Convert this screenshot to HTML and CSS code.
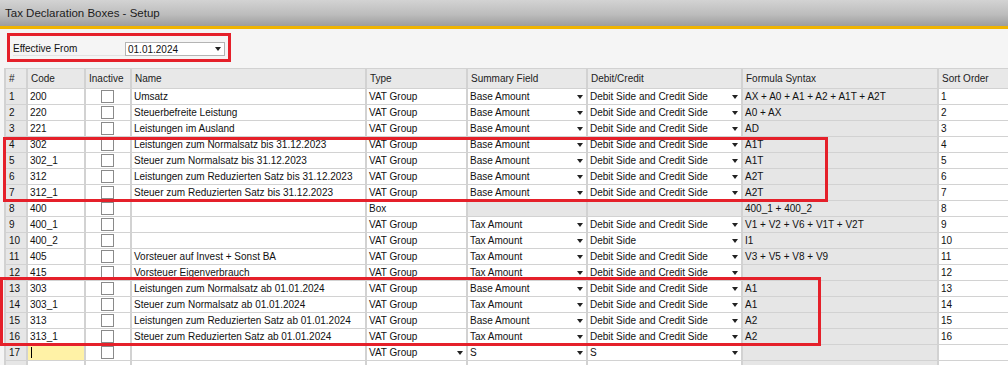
FILE: index.html
```html
<!DOCTYPE html>
<html lang="en">

<head>
  <meta charset="UTF-8">
  <meta name="viewport" content="width=device-width, initial-scale=1.0">
  <title>Tax Declaration Boxes - Setup</title>
  <link rel="stylesheet" href="styles.css">
</head>

<body>
  <div class="window">
    <div class="titleBar">Tax Declaration Boxes - Setup</div>

    <div class="filter">
      <span class="filterLabel">Effective From</span>
      <div class="combo">
        <span>01.01.2024</span>
        <i class="arrow"></i>
      </div>
    </div>

    <div class="grid">
      <div class="cell head">#</div>
      <div class="cell head">Code</div>
      <div class="cell head">Inactive</div>
      <div class="cell head">Name</div>
      <div class="cell head">Type</div>
      <div class="cell head">Summary Field</div>
      <div class="cell head">Debit/Credit</div>
      <div class="cell head">Formula Syntax</div>
      <div class="cell head">Sort Order</div>

      <div class="cell num">1</div>
      <div class="cell">200</div>
      <div class="cell chk"><span class="box"></span></div>
      <div class="cell">Umsatz</div>
      <div class="cell">VAT Group</div>
      <div class="cell dd">Base Amount<i class="arrow"></i></div>
      <div class="cell dd">Debit Side and Credit Side<i class="arrow"></i></div>
      <div class="cell ro">AX + A0 + A1 + A2 + A1T + A2T</div>
      <div class="cell">1</div>

      <div class="cell num">2</div>
      <div class="cell">220</div>
      <div class="cell chk"><span class="box"></span></div>
      <div class="cell">Steuerbefreite Leistung</div>
      <div class="cell">VAT Group</div>
      <div class="cell dd">Base Amount<i class="arrow"></i></div>
      <div class="cell dd">Debit Side and Credit Side<i class="arrow"></i></div>
      <div class="cell ro">A0 + AX</div>
      <div class="cell">2</div>

      <div class="cell num">3</div>
      <div class="cell">221</div>
      <div class="cell chk"><span class="box"></span></div>
      <div class="cell">Leistungen im Ausland</div>
      <div class="cell">VAT Group</div>
      <div class="cell dd">Base Amount<i class="arrow"></i></div>
      <div class="cell dd">Debit Side and Credit Side<i class="arrow"></i></div>
      <div class="cell ro">AD</div>
      <div class="cell">3</div>

      <div class="cell num">4</div>
      <div class="cell">302</div>
      <div class="cell chk"><span class="box"></span></div>
      <div class="cell">Leistungen zum Normalsatz bis 31.12.2023</div>
      <div class="cell">VAT Group</div>
      <div class="cell dd">Base Amount<i class="arrow"></i></div>
      <div class="cell dd">Debit Side and Credit Side<i class="arrow"></i></div>
      <div class="cell ro">A1T</div>
      <div class="cell">4</div>

      <div class="cell num">5</div>
      <div class="cell">302_1</div>
      <div class="cell chk"><span class="box"></span></div>
      <div class="cell">Steuer zum Normalsatz bis 31.12.2023</div>
      <div class="cell">VAT Group</div>
      <div class="cell dd">Base Amount<i class="arrow"></i></div>
      <div class="cell dd">Debit Side and Credit Side<i class="arrow"></i></div>
      <div class="cell ro">A1T</div>
      <div class="cell">5</div>

      <div class="cell num">6</div>
      <div class="cell">312</div>
      <div class="cell chk"><span class="box"></span></div>
      <div class="cell">Leistungen zum Reduzierten Satz bis 31.12.2023</div>
      <div class="cell">VAT Group</div>
      <div class="cell dd">Base Amount<i class="arrow"></i></div>
      <div class="cell dd">Debit Side and Credit Side<i class="arrow"></i></div>
      <div class="cell ro">A2T</div>
      <div class="cell">6</div>

      <div class="cell num">7</div>
      <div class="cell">312_1</div>
      <div class="cell chk"><span class="box"></span></div>
      <div class="cell">Steuer zum Reduzierten Satz bis 31.12.2023</div>
      <div class="cell">VAT Group</div>
      <div class="cell dd">Base Amount<i class="arrow"></i></div>
      <div class="cell dd">Debit Side and Credit Side<i class="arrow"></i></div>
      <div class="cell ro">A2T</div>
      <div class="cell">7</div>

      <div class="cell num">8</div>
      <div class="cell">400</div>
      <div class="cell chk"><span class="box"></span></div>
      <div class="cell"></div>
      <div class="cell">Box</div>
      <div class="cell ro"></div>
      <div class="cell ro"></div>
      <div class="cell ro">400_1 + 400_2</div>
      <div class="cell">8</div>

      <div class="cell num">9</div>
      <div class="cell">400_1</div>
      <div class="cell chk"><span class="box"></span></div>
      <div class="cell"></div>
      <div class="cell">VAT Group</div>
      <div class="cell dd">Tax Amount<i class="arrow"></i></div>
      <div class="cell dd">Debit Side and Credit Side<i class="arrow"></i></div>
      <div class="cell ro">V1 + V2 + V6 + V1T + V2T</div>
      <div class="cell">9</div>

      <div class="cell num">10</div>
      <div class="cell">400_2</div>
      <div class="cell chk"><span class="box"></span></div>
      <div class="cell"></div>
      <div class="cell">VAT Group</div>
      <div class="cell dd">Tax Amount<i class="arrow"></i></div>
      <div class="cell dd">Debit Side<i class="arrow"></i></div>
      <div class="cell ro">I1</div>
      <div class="cell">10</div>

      <div class="cell num">11</div>
      <div class="cell">405</div>
      <div class="cell chk"><span class="box"></span></div>
      <div class="cell">Vorsteuer auf Invest + Sonst BA</div>
      <div class="cell">VAT Group</div>
      <div class="cell dd">Tax Amount<i class="arrow"></i></div>
      <div class="cell dd">Debit Side and Credit Side<i class="arrow"></i></div>
      <div class="cell ro">V3 + V5 + V8 + V9</div>
      <div class="cell">11</div>

      <div class="cell num">12</div>
      <div class="cell">415</div>
      <div class="cell chk"><span class="box"></span></div>
      <div class="cell">Vorsteuer Eigenverbrauch</div>
      <div class="cell">VAT Group</div>
      <div class="cell dd">Tax Amount<i class="arrow"></i></div>
      <div class="cell dd">Debit Side and Credit Side<i class="arrow"></i></div>
      <div class="cell ro"></div>
      <div class="cell">12</div>

      <div class="cell num">13</div>
      <div class="cell">303</div>
      <div class="cell chk"><span class="box"></span></div>
      <div class="cell">Leistungen zum Normalsatz ab 01.01.2024</div>
      <div class="cell">VAT Group</div>
      <div class="cell dd">Base Amount<i class="arrow"></i></div>
      <div class="cell dd">Debit Side and Credit Side<i class="arrow"></i></div>
      <div class="cell ro">A1</div>
      <div class="cell">13</div>

      <div class="cell num">14</div>
      <div class="cell">303_1</div>
      <div class="cell chk"><span class="box"></span></div>
      <div class="cell">Steuer zum Normalsatz ab 01.01.2024</div>
      <div class="cell">VAT Group</div>
      <div class="cell dd">Tax Amount<i class="arrow"></i></div>
      <div class="cell dd">Debit Side and Credit Side<i class="arrow"></i></div>
      <div class="cell ro">A1</div>
      <div class="cell">14</div>

      <div class="cell num">15</div>
      <div class="cell">313</div>
      <div class="cell chk"><span class="box"></span></div>
      <div class="cell">Leistungen zum Reduzierten Satz ab 01.01.2024</div>
      <div class="cell">VAT Group</div>
      <div class="cell dd">Base Amount<i class="arrow"></i></div>
      <div class="cell dd">Debit Side and Credit Side<i class="arrow"></i></div>
      <div class="cell ro">A2</div>
      <div class="cell">15</div>

      <div class="cell num">16</div>
      <div class="cell">313_1</div>
      <div class="cell chk"><span class="box"></span></div>
      <div class="cell">Steuer zum Reduzierten Satz ab 01.01.2024</div>
      <div class="cell">VAT Group</div>
      <div class="cell dd">Tax Amount<i class="arrow"></i></div>
      <div class="cell dd">Debit Side and Credit Side<i class="arrow"></i></div>
      <div class="cell ro">A2</div>
      <div class="cell">16</div>

      <div class="cell num">17</div>
      <div class="cell active"><span class="caret"></span></div>
      <div class="cell chk"><span class="box"></span></div>
      <div class="cell"></div>
      <div class="cell dd">VAT Group<i class="arrow"></i></div>
      <div class="cell dd">S<i class="arrow"></i></div>
      <div class="cell dd">S<i class="arrow"></i></div>
      <div class="cell ro"></div>
      <div class="cell"></div>

      <div class="cell num"></div>
      <div class="cell"></div>
      <div class="cell"></div>
      <div class="cell"></div>
      <div class="cell"></div>
      <div class="cell"></div>
      <div class="cell"></div>
      <div class="cell ro"></div>
      <div class="cell"></div>
    </div>

    <!-- red highlight frames drawn over the form -->
    <div class="mark markDate"></div>
    <div class="mark markOld"></div>
    <div class="mark markNew"></div>
  </div>
</body>

</html>
```

FILE: styles.css
```css
* {
	margin: 0;
	padding: 0;
	box-sizing: border-box;
}

body {
	width: 1008px;
	height: 365px;
	overflow: hidden;
	background: #f5f5f5;
	font-family: "Liberation Sans", Arial, sans-serif;
	font-size: 10px;
	color: #111;
}

.window {
	position: relative;
	height: 100%;
}

.titleBar {
	height: 29px;
	padding: 1px 0 0 5px;
	line-height: 25px;
	font-size: 11.5px;
	color: #1c1c1c;
	background: linear-gradient(#d3d3d3, #bdbdbd 55%, #9d9d9d);
	border-bottom: 3px solid #f0b400;
}

.filter {
	display: flex;
	align-items: center;
	padding: 13px 0 12px 13px;
}

.filterLabel {
	width: 112px;
	height: 14px;
	line-height: 13px;
	border-bottom: 1px solid #e2e2e2;
}

.combo {
	display: flex;
	align-items: center;
	width: 100px;
	height: 14px;
	padding: 0 3px 0 2px;
	background: #fff;
	border: 1px solid #b4b4b4;
}

.arrow {
	margin-left: auto;
	width: 0;
	height: 0;
	border-left: 3.5px solid transparent;
	border-right: 3.5px solid transparent;
	border-top: 4px solid #222;
}

.grid {
	display: grid;
	grid-template-columns: 20px 56px 44px 233px 99px 118px 153px 194px 80px;
	grid-template-rows: 19px;
	grid-auto-rows: 15px;
	column-gap: 2px;
	row-gap: 1px;
	width: max-content;
	margin-left: 4px;
	padding: 1px 0 0 2px;
	background: #d2d2d2;
}

.cell {
	display: flex;
	align-items: center;
	padding: 0 3px 0 2px;
	background: #fff;
	white-space: nowrap;
	overflow: hidden;
}

.head {
	padding-left: 3px;
	background: #e8e8e8;
	color: #222;
}

.num {
	background: #e6e6e6;
	padding-left: 3px;
}

.ro {
	background: #e6e6e6;
}

.chk {
	justify-content: center;
}

.box {
	width: 13px;
	height: 13px;
	background: #fff;
	border: 1px solid #8a8a8a;
}

.active {
	background: #fff2a6;
}

.caret {
	width: 1px;
	height: 11px;
	margin-left: 1px;
	background: #000;
}

.mark {
	position: absolute;
	border: 3px solid #e5202a;
}

.markDate {
	left: 7px;
	top: 33px;
	width: 224px;
	height: 29px;
}

.markOld {
	left: 3px;
	top: 137px;
	width: 825px;
	height: 65px;
}

.markNew {
	left: 0;
	top: 277px;
	width: 821px;
	height: 69px;
}
```
